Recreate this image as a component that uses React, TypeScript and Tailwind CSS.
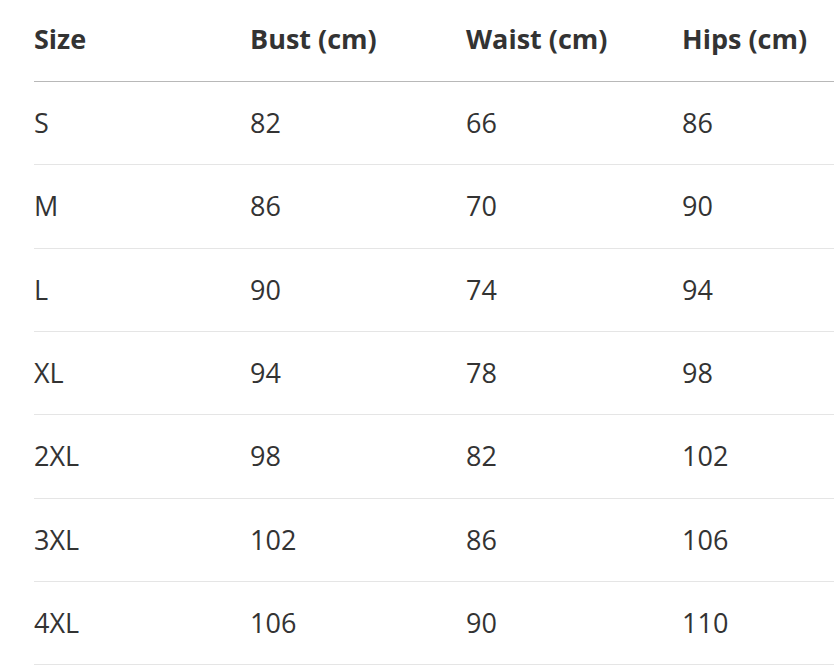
const headers = ["Size", "Bust (cm)", "Waist (cm)", "Hips (cm)"];

const rows = [
  ["S", "82", "66", "86"],
  ["M", "86", "70", "90"],
  ["L", "90", "74", "94"],
  ["XL", "94", "78", "98"],
  ["2XL", "98", "82", "102"],
  ["3XL", "102", "86", "106"],
  ["4XL", "106", "90", "110"],
];

export default function App() {
  return (
    <div
      className="w-[834px] h-[669px] overflow-hidden bg-white pl-[34px] text-[#333333]"
      style={{ fontFamily: '"Open Sans", "Noto Sans", sans-serif' }}
    >
      <div className="w-[900px]">
        <div className="flex h-[82px] items-center border-b border-[#b8b8b8] pb-[2px]">
          {headers.map((h) => (
            <div key={h} className="w-[216px] text-[27px] font-bold">
              {h}
            </div>
          ))}
        </div>
        {rows.map((r) => (
          <div
            key={r[0]}
            className="flex h-[83.33px] items-center border-b border-[#e5e5e5]"
          >
            {r.map((c, i) => (
              <div key={i} className="w-[216px] text-[27px]">
                {c}
              </div>
            ))}
          </div>
        ))}
      </div>
    </div>
  );
}
